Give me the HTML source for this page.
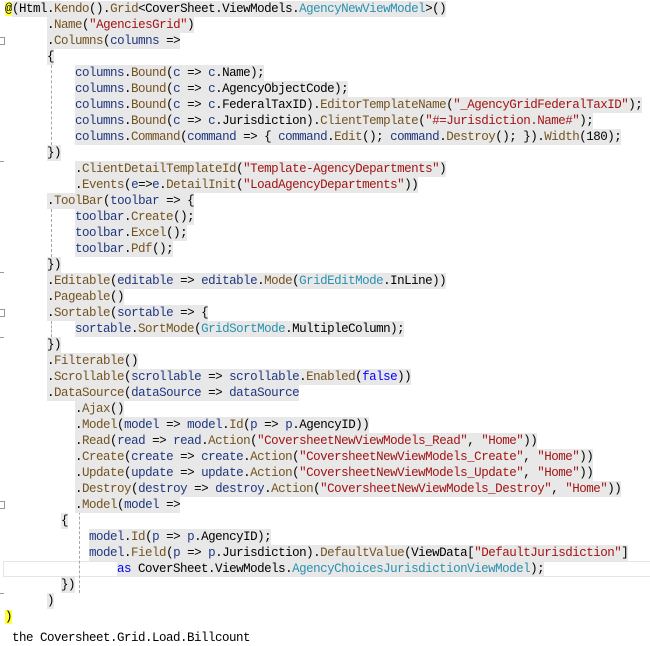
<!DOCTYPE html>
<html><head><meta charset="utf-8"><style>
html,body{margin:0;padding:0;background:#fff;width:650px;height:631px;overflow:hidden;}
#c{position:absolute;left:5px;top:1px;font-family:"Liberation Mono",monospace;font-size:12.5px;letter-spacing:-0.5px;color:#000;}
.l{height:16px;line-height:16px;white-space:pre;}
.h{background:#e8e8e8;display:inline-block;height:16px;}
.m{color:#74531f}.p{color:#1f377f}.t{color:#2b91af}.s{color:#a31515}.k{color:#0000ff}
.y{background:#ffff3a}
.g{position:absolute;border-left:1px dashed #a8a8a8;width:0;}
.cur{position:absolute;left:3px;top:561px;width:650px;height:14px;border:1px solid #e4e4ea;background:#fff;}
.mk{position:absolute;left:-3px;width:6px;height:6px;border:1px solid #999;background:#fff;}
.tk{position:absolute;left:0;width:4px;height:1px;background:#999;}
</style></head><body>
<div class="cur"></div>
<div class="mk" style="top:37px"></div>
<div class="mk" style="top:309px"></div>
<div class="mk" style="top:501px"></div>
<div class="tk" style="top:161px"></div>
<div class="tk" style="top:272px"></div>
<div class="tk" style="top:337px"></div>
<div class="tk" style="top:593px"></div>
<div class="g" style="left:51px;top:65px;height:80px"></div>
<div class="g" style="left:51px;top:209px;height:48px"></div>
<div class="g" style="left:51px;top:321px;height:16px"></div>
<div class="g" style="left:79px;top:497px;height:96px"></div>
<div id="c">
<div class="l"><span class="y">@</span><span class="h">(Html.<span class="m">Kendo</span>().<span class="m">Grid</span>&lt;CoverSheet.ViewModels.<span class="t">AgencyNewViewModel</span>&gt;()</span></div>
<div class="l">      <span class="h">.<span class="m">Name</span>(<span class="s">"AgenciesGrid"</span>)</span></div>
<div class="l">      <span class="h">.<span class="m">Columns</span>(<span class="p">columns</span> =&gt;</span></div>
<div class="l">      <span class="h">{</span></div>
<div class="l">          <span class="h"><span class="p">columns</span>.<span class="m">Bound</span>(<span class="p">c</span> =&gt; <span class="p">c</span>.Name);</span></div>
<div class="l">          <span class="h"><span class="p">columns</span>.<span class="m">Bound</span>(<span class="p">c</span> =&gt; <span class="p">c</span>.AgencyObjectCode);</span></div>
<div class="l">          <span class="h"><span class="p">columns</span>.<span class="m">Bound</span>(<span class="p">c</span> =&gt; <span class="p">c</span>.FederalTaxID).<span class="m">EditorTemplateName</span>(<span class="s">"_AgencyGridFederalTaxID"</span>);</span></div>
<div class="l">          <span class="h"><span class="p">columns</span>.<span class="m">Bound</span>(<span class="p">c</span> =&gt; <span class="p">c</span>.Jurisdiction).<span class="m">ClientTemplate</span>(<span class="s">"#=Jurisdiction.Name#"</span>);</span></div>
<div class="l">          <span class="h"><span class="p">columns</span>.<span class="m">Command</span>(<span class="p">command</span> =&gt; { <span class="p">command</span>.<span class="m">Edit</span>(); <span class="p">command</span>.<span class="m">Destroy</span>(); }).<span class="m">Width</span>(180);</span></div>
<div class="l">      <span class="h">})</span></div>
<div class="l">          <span class="h">.<span class="m">ClientDetailTemplateId</span>(<span class="s">"Template-AgencyDepartments"</span>)</span></div>
<div class="l">          <span class="h">.<span class="m">Events</span>(<span class="p">e</span>=&gt;<span class="p">e</span>.<span class="m">DetailInit</span>(<span class="s">"LoadAgencyDepartments"</span>))</span></div>
<div class="l">      <span class="h">.<span class="m">ToolBar</span>(<span class="p">toolbar</span> =&gt; {</span></div>
<div class="l">          <span class="h"><span class="p">toolbar</span>.<span class="m">Create</span>();</span></div>
<div class="l">          <span class="h"><span class="p">toolbar</span>.<span class="m">Excel</span>();</span></div>
<div class="l">          <span class="h"><span class="p">toolbar</span>.<span class="m">Pdf</span>();</span></div>
<div class="l">      <span class="h">})</span></div>
<div class="l">      <span class="h">.<span class="m">Editable</span>(<span class="p">editable</span> =&gt; <span class="p">editable</span>.<span class="m">Mode</span>(<span class="t">GridEditMode</span>.InLine))</span></div>
<div class="l">      <span class="h">.<span class="m">Pageable</span>()</span></div>
<div class="l">      <span class="h">.<span class="m">Sortable</span>(<span class="p">sortable</span> =&gt; {</span></div>
<div class="l">          <span class="h"><span class="p">sortable</span>.<span class="m">SortMode</span>(<span class="t">GridSortMode</span>.MultipleColumn);</span></div>
<div class="l">      <span class="h">})</span></div>
<div class="l">      <span class="h">.<span class="m">Filterable</span>()</span></div>
<div class="l">      <span class="h">.<span class="m">Scrollable</span>(<span class="p">scrollable</span> =&gt; <span class="p">scrollable</span>.<span class="m">Enabled</span>(<span class="k">false</span>))</span></div>
<div class="l">      <span class="h">.<span class="m">DataSource</span>(<span class="p">dataSource</span> =&gt; <span class="p">dataSource</span></span></div>
<div class="l">          <span class="h">.<span class="m">Ajax</span>()</span></div>
<div class="l">          <span class="h">.<span class="m">Model</span>(<span class="p">model</span> =&gt; <span class="p">model</span>.<span class="m">Id</span>(<span class="p">p</span> =&gt; <span class="p">p</span>.AgencyID))</span></div>
<div class="l">          <span class="h">.<span class="m">Read</span>(<span class="p">read</span> =&gt; <span class="p">read</span>.<span class="m">Action</span>(<span class="s">"CoversheetNewViewModels_Read"</span>, <span class="s">"Home"</span>))</span></div>
<div class="l">          <span class="h">.<span class="m">Create</span>(<span class="p">create</span> =&gt; <span class="p">create</span>.<span class="m">Action</span>(<span class="s">"CoversheetNewViewModels_Create"</span>, <span class="s">"Home"</span>))</span></div>
<div class="l">          <span class="h">.<span class="m">Update</span>(<span class="p">update</span> =&gt; <span class="p">update</span>.<span class="m">Action</span>(<span class="s">"CoversheetNewViewModels_Update"</span>, <span class="s">"Home"</span>))</span></div>
<div class="l">          <span class="h">.<span class="m">Destroy</span>(<span class="p">destroy</span> =&gt; <span class="p">destroy</span>.<span class="m">Action</span>(<span class="s">"CoversheetNewViewModels_Destroy"</span>, <span class="s">"Home"</span>))</span></div>
<div class="l">          <span class="h">.<span class="m">Model</span>(<span class="p">model</span> =&gt;</span></div>
<div class="l">        <span class="h">{</span></div>
<div class="l">            <span class="h"><span class="p">model</span>.<span class="m">Id</span>(<span class="p">p</span> =&gt; <span class="p">p</span>.AgencyID);</span></div>
<div class="l">            <span class="h"><span class="p">model</span>.<span class="m">Field</span>(<span class="p">p</span> =&gt; <span class="p">p</span>.Jurisdiction).<span class="m">DefaultValue</span>(ViewData[<span class="s">"DefaultJurisdiction"</span>]</span></div>
<div class="l">                <span class="h"><span class="k">as</span> CoverSheet.ViewModels.<span class="t">AgencyChoicesJurisdictionViewModel</span>);</span></div>
<div class="l">        <span class="h">})</span></div>
<div class="l">      <span class="h">)</span></div>
<div class="l"><span class="y">)</span></div>
<div class="l" style="position:relative;top:5px"> the Coversheet.Grid.Load.Billcount</div>
</div>
</body></html>
